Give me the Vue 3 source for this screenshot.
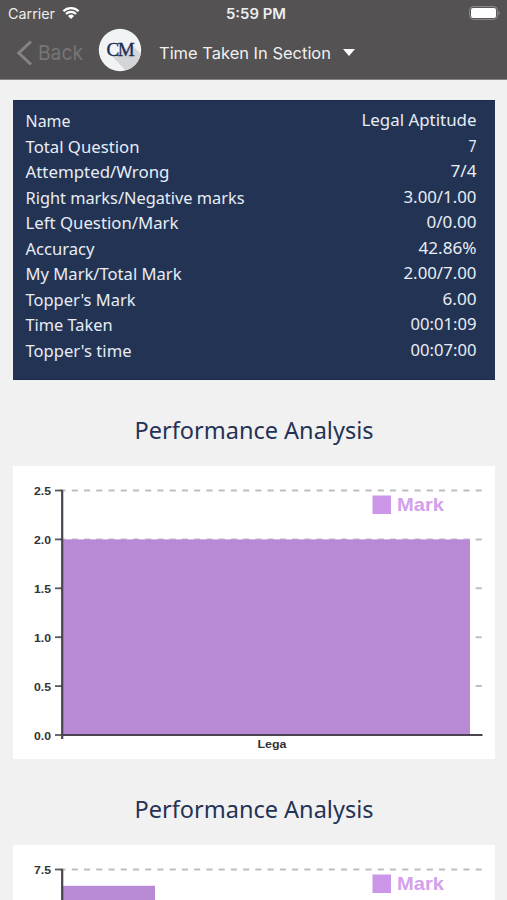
<script setup>
  const stats = [
    { label: 'Name', value: 'Legal Aptitude', width: 45, valueWidth: 115 },
    { label: 'Total Question', value: '7', width: 114, valueWidth: 8 },
    { label: 'Attempted/Wrong', value: '7/4', width: 144, valueWidth: 26 },
    { label: 'Right marks/Negative marks', value: '3.00/1.00', width: 219, valueWidth: 73 },
    { label: 'Left Question/Mark', value: '0/0.00', width: 153, valueWidth: 50 },
    { label: 'Accuracy', value: '42.86%', width: 69, valueWidth: 58 },
    { label: 'My Mark/Total Mark', value: '2.00/7.00', width: 156, valueWidth: 73 },
    { label: "Topper's Mark", value: '6.00', width: 110, valueWidth: 34 },
    { label: 'Time Taken', value: '00:01:09', width: 87, valueWidth: 66 },
    { label: "Topper's time", value: '00:07:00', width: 106, valueWidth: 66 },
  ]

  // the second chart is cut by the bottom of the screen, only its first tick shows
  const charts = [
    { id: 1, max: 2.5, ticks: [2.5, 2, 1.5, 1, 0.5, 0], value: 2, barWidth: 407, label: 'Lega' },
    { id: 2, max: 7.5, ticks: [7.5], value: 7, barWidth: 92, label: '' },
  ]

  const top = 24.5
  const plotHeight = 244.5
  const y = (chart, v) => top + plotHeight * (1 - v / chart.max)
</script>

<template>
  <div class="screen">
    <header class="header">
      <div class="status-bar">
        <div class="carrier">
          <svg width="54" height="20">
            <text x="8" y="18.5" textLength="47" lengthAdjust="spacingAndGlyphs" class="status-text">Carrier</text>
          </svg>
          <svg class="wifi" width="18" height="14" viewBox="0 0 18 14">
            <path d="M1.4 5.2a10.8 10.8 0 0 1 15.2 0M4 8a7.1 7.1 0 0 1 10 0" />
            <path class="dot" d="M9 13L6 9.9a4.3 4.3 0 0 1 6 0z" />
          </svg>
        </div>
        <svg class="clock" width="62" height="20">
          <text x="1" y="18.5" textLength="60" lengthAdjust="spacingAndGlyphs" class="status-text strong">5:59 PM</text>
        </svg>
        <svg class="battery" width="32" height="14" viewBox="0 0 32 14">
          <rect x="0.6" y="0.6" width="27.8" height="12.8" rx="3.6" fill="none" stroke="#8e8d8d" />
          <rect x="2" y="2" width="25" height="10" rx="2" fill="#fff" />
          <path d="M29.6 4.8q2 2.2 0 4.4z" fill="#a3a2a2" />
        </svg>
      </div>
      <nav class="nav">
        <svg class="chevron" width="17" height="26" viewBox="0 0 17 26">
          <path d="M15 1.5L2.8 13 15 24.5" />
        </svg>
        <svg class="back" width="48" height="28">
          <text x="1" y="20.5" textLength="45" lengthAdjust="spacingAndGlyphs">Back</text>
        </svg>
        <svg class="logo" width="44" height="44" viewBox="0 0 44 44">
          <defs>
            <clipPath id="disc"><circle cx="22" cy="22" r="21.2" /></clipPath>
          </defs>
          <circle cx="22" cy="22" r="21.2" fill="#f2f3f4" />
          <path d="M14 28L34 17 44 27V44H29z" fill="#d3d5d8" clip-path="url(#disc)" />
          <text x="8.5" y="28" textLength="26.5" lengthAdjust="spacingAndGlyphs">CM</text>
        </svg>
        <svg class="title" width="174" height="28">
          <text x="0" y="20" textLength="172" lengthAdjust="spacingAndGlyphs">Time Taken In Section</text>
        </svg>
        <svg class="caret" width="12" height="7" viewBox="0 0 12 7">
          <path d="M0 0h12L6 7z" />
        </svg>
      </nav>
    </header>

    <main class="content">
      <section class="stats">
        <div v-for="row in stats" :key="row.label" class="row">
          <svg width="230" height="25">
            <text x="0.5" y="18.5" :textLength="row.width" lengthAdjust="spacingAndGlyphs">{{ row.label }}</text>
          </svg>
          <svg :width="row.valueWidth" height="25">
            <text x="0.5" y="17.5" :textLength="row.valueWidth" lengthAdjust="spacingAndGlyphs">{{ row.value }}</text>
          </svg>
        </div>
      </section>

      <section v-for="chart in charts" :key="chart.id" class="analysis">
        <h2 class="heading">
          <svg width="240" height="36">
            <text x="0.5" y="27" textLength="239" lengthAdjust="spacingAndGlyphs">Performance Analysis</text>
          </svg>
        </h2>
        <svg class="chart" width="482" height="293" viewBox="0 0 482 293">
          <g v-for="tick in chart.ticks" :key="tick">
            <line v-if="tick" class="grid" x1="46.5" x2="469" :y1="y(chart, tick)" :y2="y(chart, tick)" />
            <line class="tick" x1="42" x2="50" :y1="y(chart, tick)" :y2="y(chart, tick)" />
            <text class="tick-label" x="21" :y="y(chart, tick) + 4.8" textLength="17" lengthAdjust="spacingAndGlyphs">
              {{ tick.toFixed(1) }}
            </text>
          </g>
          <rect
            class="bar"
            x="50"
            :y="y(chart, chart.value)"
            :width="chart.barWidth"
            :height="y(chart, 0) - y(chart, chart.value)" />
          <path class="axis" d="M49.2 24.5V273M49 269H469.5" />
          <rect x="359.5" y="29.5" width="18.5" height="18.5" fill="#cb96e8" />
          <text class="legend" x="384" y="44.5" textLength="47" lengthAdjust="spacingAndGlyphs">Mark</text>
          <text
            v-if="chart.label"
            class="tick-label"
            x="244.5"
            y="281.5"
            textLength="29"
            lengthAdjust="spacingAndGlyphs">
            {{ chart.label }}
          </text>
        </svg>
      </section>
    </main>
  </div>
</template>

<style>
  body {
    margin: 0;
    overflow: hidden;
  }
</style>

<style scoped>
  .screen {
    width: 507px;
    height: 900px;
    overflow: hidden;
    background: #f1f1f1;
    font-family: Inter, 'Liberation Sans', sans-serif;
  }

  svg {
    display: block;
    flex: none;
    overflow: visible;
  }

  .header {
    box-sizing: border-box;
    height: 79.5px;
    background: #545253;
    border-bottom: 1px solid #858485;
  }

  .status-bar {
    display: grid;
    grid-template-columns: 1fr 62px 1fr;
    height: 27px;
  }

  .carrier {
    display: flex;
    gap: 8px;
  }

  .status-text {
    font-size: 14px;
    fill: #eee;
  }

  .strong {
    font-weight: 600;
  }

  .clock {
    margin-left: 2px;
  }

  .wifi {
    margin-top: 6px;
    fill: none;
    stroke: #fff;
    stroke-width: 2.3;
  }

  .wifi .dot {
    fill: #fff;
    stroke: none;
  }

  .battery {
    justify-self: end;
    margin: 6px 6.5px 0 0;
  }

  .nav {
    display: flex;
    align-items: center;
    height: 51px;
    padding-left: 16px;
  }

  .chevron {
    fill: none;
    stroke: #858384;
    stroke-width: 3;
  }

  .back {
    margin-left: 4px;
    font-size: 20.5px;
    fill: #777576;
  }

  .logo {
    margin: -5px 0 0 13px;
    font-family: 'Liberation Serif', serif;
    font-size: 18px;
    letter-spacing: -1.5px;
    fill: #1b2c54;
    stroke-width: 0.3;
  }

  .logo text {
    stroke: #1b2c54;
  }

  .title {
    margin-left: 17px;
    font-size: 16.5px;
    fill: #f0f0f0;
  }

  .caret {
    margin-left: 10px;
    fill: #fff;
  }

  .content {
    padding: 20px 12.5px 0 13px;
  }

  .stats {
    box-sizing: border-box;
    height: 280.5px;
    padding: 7.5px 18.5px 0 12px;
    background: #233354;
    border: 1px solid #1b2b4d;
    border-width: 1px 0;
    font-family: 'Noto Sans', sans-serif;
    font-size: 16.5px;
    fill: #e7edf5;
  }

  .row {
    display: flex;
    justify-content: space-between;
    height: 25.5px;
  }

  .analysis {
    height: 378.8px;
  }

  .heading {
    display: flex;
    justify-content: center;
    height: 54px;
    margin: 0;
    padding-top: 32px;
    font-family: 'Noto Sans', sans-serif;
    font-size: 24px;
    font-weight: 400;
    fill: #243355;
  }

  .chart {
    background: #fff;
    font-family: 'Liberation Sans', sans-serif;
  }

  .grid {
    stroke: #bebebe;
    stroke-width: 2;
    stroke-dasharray: 6.12 6.12;
  }

  .tick {
    stroke: #5c5a5d;
    stroke-width: 1.8;
  }

  .axis {
    fill: none;
    stroke: #4b434f;
    stroke-width: 2.2;
  }

  .bar {
    fill: #b889d5;
  }

  .tick-label {
    font-size: 11.8px;
    font-weight: 700;
    fill: #333;
  }

  .legend {
    font-size: 19px;
    font-weight: 700;
    fill: #d3a0ec;
  }
</style>
